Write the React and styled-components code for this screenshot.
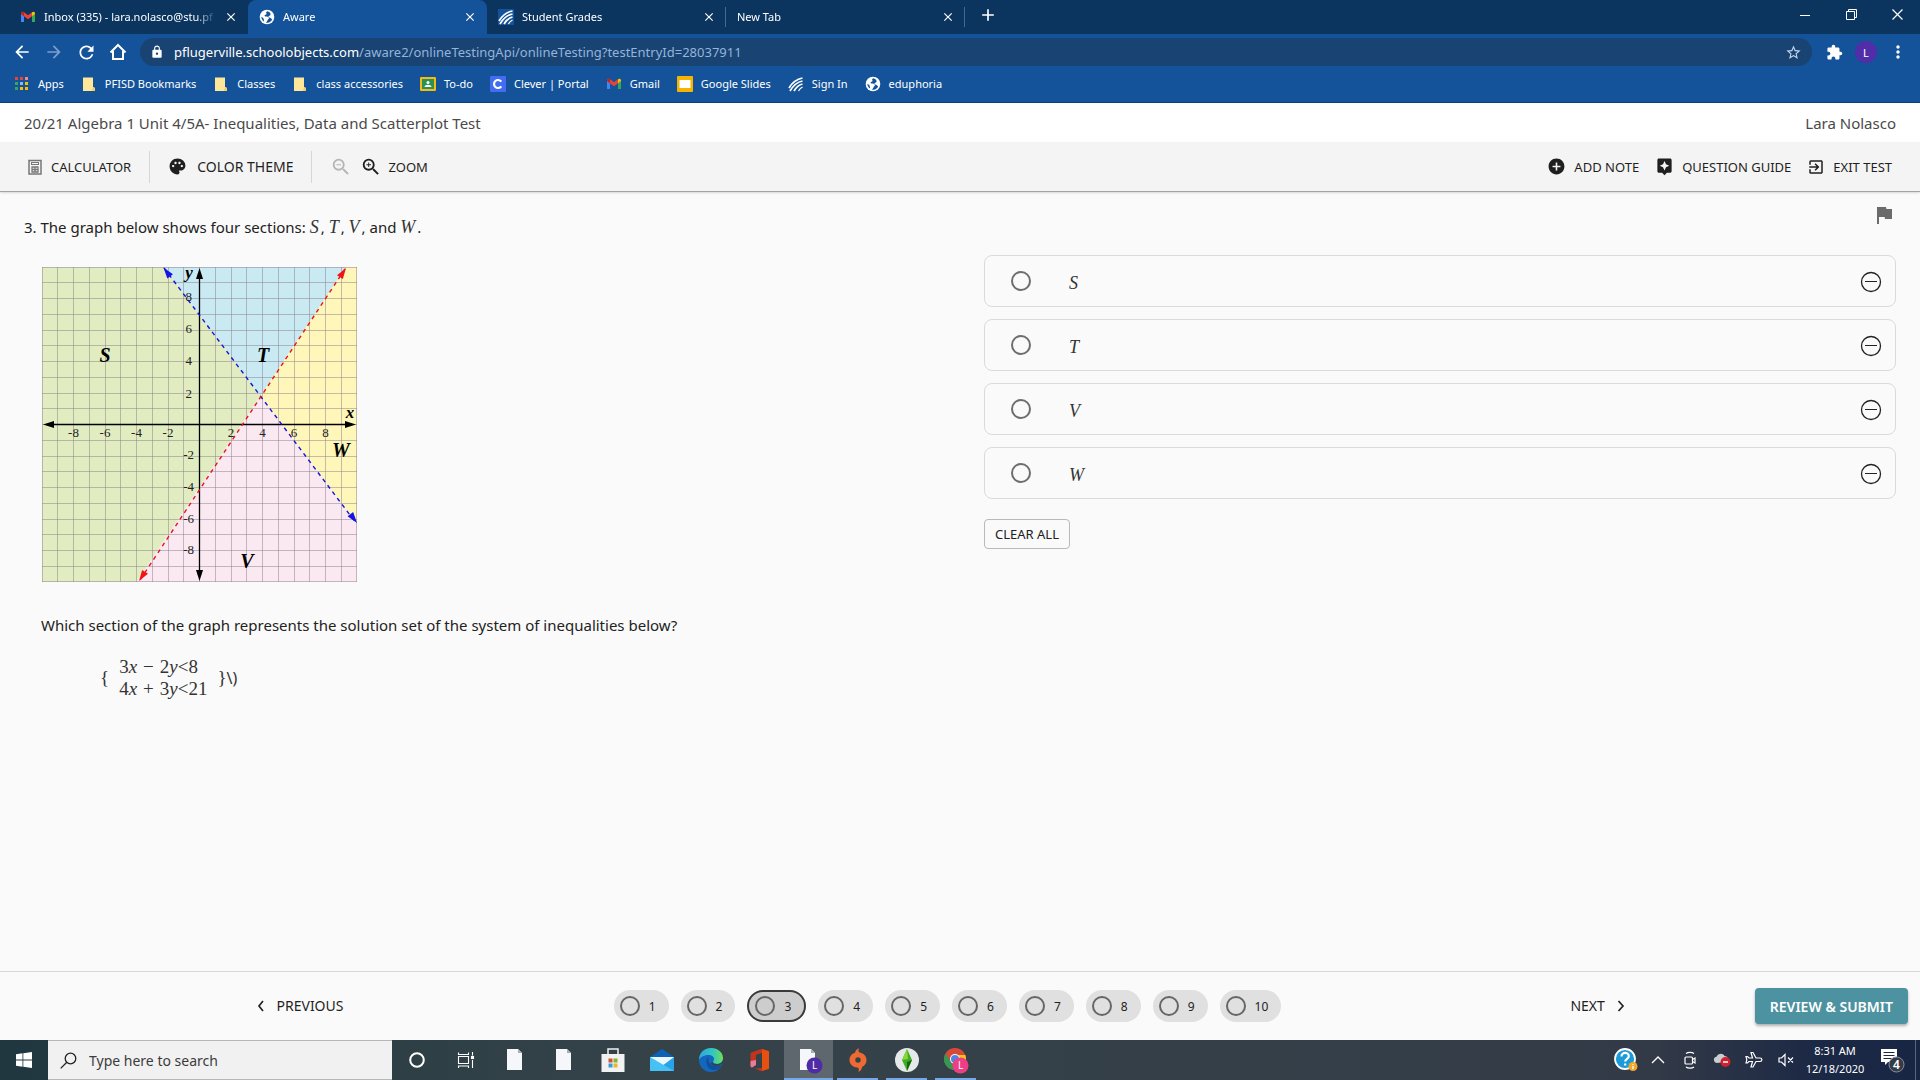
import React, { useState } from "react";
import styled, { createGlobalStyle, css } from "styled-components";
import {
  MdArrowBack,
  MdArrowForward,
  MdRefresh,
  MdLock,
  MdStarBorder,
  MdExtension,
  MdMoreVert,
  MdPalette,
  MdZoomIn,
  MdZoomOut,
  MdAddCircle,
  MdAssistant,
  MdExitToApp,
  MdFlag,
  MdClose,
  MdAdd,
} from "react-icons/md";

const sans = `"Noto Sans", "Open Sans", sans-serif`;
const serif = `"Liberation Serif", serif`;

const GlobalStyle = createGlobalStyle`
  *, *::before, *::after { box-sizing: border-box; }
  body { margin: 0; background: #fafafa; color: #222; font-family: ${sans}; }
  button, input { font: inherit; color: inherit; margin: 0; }
  button { padding: 0; border: 0; background: none; cursor: pointer; }
  a { color: inherit; text-decoration: none; }
  svg { display: block; flex: none; }
`;

const Page = styled.div`
  display: flex;
  flex-direction: column;
  min-height: 100vh;
`;

/* ---------- browser window ---------- */

const Browser = styled.header`
  background: #14539a;
  color: #fff;
  border-bottom: 1px solid #123f73;
  font-size: 12px;
`;

const TabStrip = styled.div`
  display: flex;
  height: 34px;
  padding-left: 9px;
  background: #0b355f;
`;

const Tab = styled.div`
  display: flex;
  align-items: center;
  flex: 0 1 239px;
  min-width: 0;
  gap: 8px;
  padding: 0 10px 0 11px;
  border-radius: 8px 8px 0 0;
  background: ${(p) => (p.$active ? "#14539a" : "transparent")};
`;

const TabRule = styled.div`
  width: 1px;
  height: 20px;
  margin: 7px 0 0 -1px;
  background: #3f6a98;
`;

const TabTitle = styled.button`
  flex: 1;
  min-width: 0;
  overflow: hidden;
  text-align: left;
  font-size: 11px;
  line-height: 20px;
  white-space: nowrap;
  mask-image: linear-gradient(90deg, #000 88%, transparent);
`;

const IconButton = styled.button`
  display: grid;
  place-items: center;
  flex: none;
  width: ${(p) => p.$size || 32}px;
  height: ${(p) => p.$size || 32}px;
  color: ${(p) => p.$color || "inherit"};
`;

const WindowControls = styled.div`
  display: flex;
  margin-left: auto;
`;

const WindowButton = styled.button`
  display: grid;
  place-items: center;
  width: 46px;
  height: 29px;
`;

const AddressRow = styled.div`
  display: flex;
  align-items: center;
  height: 36px;
  padding: 0 6px;
`;

const AddressBar = styled.div`
  display: flex;
  align-items: center;
  flex: 1;
  min-width: 0;
  height: 28px;
  margin: 0 6px;
  padding: 0 10px;
  border-radius: 14px;
  background: #194372;
`;

const Url = styled.div`
  flex: 1;
  min-width: 0;
  margin-left: 10px;
  overflow: hidden;
  white-space: nowrap;
  font-size: 13px;
  line-height: 20px;
  color: #93b4dc;

  b {
    font-weight: 400;
    color: #fff;
  }
`;

const Avatar = styled.span`
  display: grid;
  place-items: center;
  width: 22px;
  height: 22px;
  border-radius: 50%;
  background: #512da8;
  font-size: 11px;
`;

const Bookmarks = styled.nav`
  display: flex;
  align-items: center;
  gap: 17px;
  height: 32px;
  padding: 0 14px 4px;
`;

const Bookmark = styled.a`
  display: flex;
  align-items: center;
  gap: 8px;
  font-size: 11px;
  line-height: 16px;
  white-space: nowrap;
`;

/* ---------- test header ---------- */

const TitleBar = styled.div`
  display: flex;
  align-items: center;
  justify-content: space-between;
  height: 39px;
  padding: 0 24px;
  background: #fff;
  color: #4a4a4a;
  font-size: 15px;
`;

const TestTitle = styled.h1`
  margin: 0;
  font-size: inherit;
  font-weight: 400;
`;

const ToolBar = styled.div`
  display: flex;
  align-items: center;
  justify-content: space-between;
  height: 50px;
  padding: 0 28px 0 27px;
  background: #f4f4f4;
  border-bottom: 1px solid #a3a3a3;
  box-shadow: 0 1px 2px rgba(0, 0, 0, 0.14);
`;

const ToolGroup = styled.div`
  display: flex;
  align-items: center;
  gap: ${(p) => p.$gap || 16}px;
`;

const Tool = styled.button`
  display: flex;
  align-items: center;
  gap: ${(p) => p.$gap || 8}px;
  font-size: ${(p) => (p.$large ? 14 : 13)}px;
  line-height: 20px;
  color: #1f1f1f;
`;

const ToolRule = styled.div`
  width: 1px;
  height: 32px;
  background: #d6d6d6;
`;

/* ---------- question ---------- */

const Main = styled.main`
  display: grid;
  grid-template-columns: minmax(0, 1fr) minmax(0, 1fr);
  gap: 48px;
  flex: 1;
  padding: 11px 24px 24px;
`;

const Question = styled.section`
  padding-top: 12px;
  font-size: 15px;
  line-height: 24px;
`;

const Prompt = styled.p`
  margin: 0;
  padding-left: ${(p) => (p.$indent ? 17 : 0)}px;
`;

const Var = styled.i`
  margin-right: 2px;
  font: italic 18px/20px ${serif};
  color: #333;
`;

const Graph = styled.svg`
  margin: 28px 0 31px 18px;
  width: 315px;
  height: 315px;
  overflow: visible;
  font-family: ${serif};
`;

const Equations = styled.div`
  display: flex;
  align-items: center;
  gap: 10px;
  margin: 19px 0 0 76px;
  font: 19px/22px ${serif};
  color: #333;
`;

const Operator = styled.span`
  padding: 0 6px;
`;

const Trail = styled.span`
  font-family: ${sans};
  font-size: 16px;
`;

const Answers = styled.form`
  display: flex;
  flex-direction: column;
  align-items: stretch;
`;

const FlagButton = styled(IconButton)`
  align-self: flex-end;
  color: #6b6b6b;
`;

const AnswerList = styled.div`
  display: grid;
  gap: 12px;
  margin: 28px 0 20px;
`;

const Answer = styled.div`
  display: flex;
  align-items: center;
  height: 52px;
  padding: 0 15px 0 26px;
  border: 1px solid #d9dadb;
  border-radius: 8px;

  label {
    flex: 1;
    padding: 4px 0 0 38px;
  }
`;

const Radio = styled.input`
  appearance: none;
  flex: none;
  width: 20px;
  height: 20px;
  border: 2px solid #6e6e6e;
  border-radius: 50%;

  &:checked {
    background: radial-gradient(#6e6e6e 45%, transparent 50%);
  }
`;

const ClearButton = styled.button`
  align-self: flex-start;
  height: 30px;
  padding: 0 10px;
  border: 1px solid #b9b9b9;
  border-radius: 4px;
  font-size: 13px;
`;

/* ---------- question navigation ---------- */

const Footer = styled.footer`
  display: grid;
  grid-template-columns: 600fr 695fr 625fr;
  align-items: center;
  height: 69px;
  border-top: 1px solid #d5d9d9;
`;

const FooterCell = styled.div`
  display: flex;
  align-items: center;
  justify-content: ${(p) => (p.$end ? "flex-end" : "center")};
  gap: ${(p) => p.$gap || 0}px;
  padding-right: ${(p) => (p.$end ? 12 : 0)}px;
`;

const Pill = styled.button`
  display: flex;
  align-items: center;
  gap: 9px;
  height: 32px;
  padding: 0 13px 0 6px;
  border-radius: 16px;
  background: #e0e0e0;
  font-size: 12px;

  &::before {
    content: "";
    width: 20px;
    height: 20px;
    border: 2px solid #666;
    border-radius: 50%;
  }

  ${(p) =>
    p.$current &&
    css`
      border: 2px solid #3a3a3a;
      background: #cdcdcd;
    `}
`;

const Submit = styled.button`
  height: 36px;
  padding: 0 15px;
  border-radius: 4px;
  background: #4d92a1;
  box-shadow: 0 2px 3px rgba(0, 0, 0, 0.3);
  color: #fff;
  font-size: 14px;
  font-weight: 600;
`;

/* ---------- taskbar ---------- */

const Taskbar = styled.div`
  display: flex;
  align-items: stretch;
  height: 40px;
  background: linear-gradient(90deg, #20373f, #354349 33%, #343e48 72%, #333a47 86%, #1b2845 95%, #182644);
  color: #fff;
`;

const StartButton = styled(IconButton)`
  width: 48px;
  height: 40px;
`;

const SearchBox = styled.label`
  display: flex;
  align-items: center;
  gap: 12px;
  flex: 0 1 344px;
  padding: 0 12px;
  border: 1px solid #b5b8ba;
  border-width: 1px 0;
  background: #f1f1f1;
  color: #222;

  input {
    flex: 1;
    min-width: 0;
    padding: 0;
    border: 0;
    outline: 0;
    background: none;
    font-size: 14px;
  }

  input::placeholder {
    color: #3c3c3c;
    opacity: 1;
  }
`;

const TaskButton = styled.button`
  display: grid;
  place-items: center;
  width: 49px;
  padding: 0 ${(p) => (p.$active ? 0 : 4)}px;
  background: ${(p) => (p.$active ? "#5d676d" : "none")};

  &::after {
    content: "";
    grid-area: 1 / 1;
    align-self: end;
    justify-self: stretch;
    height: 2px;
    background: ${(p) => (p.$open ? "#76a9e8" : "transparent")};
  }

  svg {
    grid-area: 1 / 1;
  }
`;

const Tray = styled.div`
  display: flex;
  align-items: center;
  margin-left: auto;
`;

const Clock = styled.time`
  display: block;
  width: 66px;
  text-align: center;
  font-size: 11px;
  line-height: 18px;
`;

const NoticeButton = styled(IconButton)`
  width: 48px;
  height: 40px;
  margin-right: 4px;
  border-right: 1px solid #5b6580;
`;

/* ---------- drawings ---------- */

const GmailIcon = () => (
  <svg width="16" height="16" viewBox="0 0 16 16">
    <path d="M1 4v9h3V7z" fill="#4285f4" />
    <path d="M15 4v9h-3V7z" fill="#34a853" />
    <path d="M1 4.5C1 2.700 2.700 2.200 4 3.200L8 6.200l4-3v4L8 10.200 4 7.200 1 5z" fill="#ea4335" />
    <path d="M12 3.200c1.300-1 3-.5 3 1.300V5l-3 2.200z" fill="#fbbc04" />
    <path d="M1 4.500C1 3 2.500 2.200 4 3.200v4L1 5z" fill="#c5221f" />
  </svg>
);

const GlobeIcon = () => (
  <svg width="16" height="16" viewBox="0 0 16 16">
    <circle cx="8" cy="8" r="7.300" fill="#fff" />
    <path
      d="M8.500 2.200c-1.500.5-1.700 1.600-1 2.300.4.600-.4 1.200-1.200 1.300-1 .3-.8 1.500.2 1.700 1.600 0 3 .2 3.400 1.300.4 1-.9 1.400-1.300 2.300-.3.900-.9 2-1.700 2.300 2.800 1 5.800-.9 6.300-3.400-1 .2-1.300-1-2.200-1.200-.8-.4-1.700-.4-1.500-1.300.2-.8 1.300-.6 1.900-1.200.4-.7-.3-1.200 0-2.200-.8-.9-1.800-1.600-2.900-1.900zM2.400 7.700c.9.700 2.400 1.400 2.300 2.400 0 .9.500 1.600.4 2.400-1.700-.9-2.800-2.700-2.700-4.800z"
      fill="#14539a"
    />
  </svg>
);

const GradesIcon = ({ boxed }) => (
  <svg width="16" height="16" viewBox="0 0 16 16">
    {boxed && <rect width="16" height="16" fill="#14539a" />}
    <g fill="none" stroke="#fff" strokeWidth="1.700">
      <path d="M1 12C4 7 9 3 14.500 2" />
      <path d="M2 15C5 10 9 6 14.500 5" />
      <path d="M6 15C8 11.500 10.500 9 14.500 8" />
      <path d="M10.500 15c1-1.800 2.200-3 4-4" strokeWidth="1.200" />
    </g>
  </svg>
);

const AppsIcon = () => (
  <svg width="16" height="16" viewBox="0 0 16 16">
    {["#ea4335", "#ea4335", "#f28b82", "#34a853", "#8ab4f8", "#fbbc04", "#34a853", "#fbbc04", "#fbbc04"].map((c, i) => (
      <rect key={i} x={1 + (i % 3) * 5} y={1 + Math.floor(i / 3) * 5} width="3" height="3" fill={c} />
    ))}
  </svg>
);

const FolderIcon = () => (
  <svg width="16" height="16" viewBox="0 0 16 16">
    <path d="M2 1.500h10v9.500l2 1v3H2z" fill="#ffe79a" />
    <path d="M12 11l2 1v3h-3z" fill="#f3cd62" />
  </svg>
);

const ClassroomIcon = () => (
  <svg width="16" height="16" viewBox="0 0 16 16">
    <rect y="1" width="16" height="14" rx="1" fill="#f5ba15" />
    <rect x="2" y="3" width="12" height="10" fill="#2b9252" />
    <circle cx="8" cy="6.500" r="1.500" fill="#fff" />
    <path d="M4.500 11c0-3 7-3 7 0z" fill="#fff" />
  </svg>
);

const CleverIcon = () => (
  <svg width="16" height="16" viewBox="0 0 16 16">
    <rect width="16" height="16" rx="1" fill="#436cf2" />
    <path d="M11.300 5.700A4 4 0 1 0 11.300 10.300" fill="none" stroke="#fff" strokeWidth="2.200" />
  </svg>
);

const SlidesIcon = () => (
  <svg width="16" height="16" viewBox="0 0 16 16">
    <rect width="16" height="16" rx="1" fill="#f4b400" />
    <rect x="2.500" y="4" width="11" height="8" fill="#fff" />
  </svg>
);

const HomeIcon = () => (
  <svg width="18" height="18" viewBox="0 0 18 18" fill="none" stroke="#fff" strokeWidth="2">
    <path d="M1.500 9.500L9 2l7.500 7.500M4 8v8h10V8" />
  </svg>
);

const CalculatorIcon = () => (
  <svg width="16" height="16" viewBox="0 0 16 16" fill="none" stroke="#777">
    <rect x="2" y="1.500" width="12" height="13.500" strokeWidth="1.500" />
    <rect x="4.500" y="3.500" width="7" height="2" />
    <path d="M4.500 8h7M4.500 10.500h7M4.500 13h7M5 7.500v6M8 7.500v6M11 7.500v6" strokeWidth="1.300" />
  </svg>
);

const MinusCircle = () => (
  <svg width="22" height="22" viewBox="0 0 22 22" fill="none" stroke="#222" strokeWidth="1.300">
    <circle cx="11" cy="11" r="9.500" />
    <path d="M5 10.500h12" strokeWidth="1" />
  </svg>
);

const Chevron = ({ right }) => (
  <svg width="8" height="12" viewBox="0 0 8 12" fill="none" stroke="#222" strokeWidth="1.700">
    <path d={right ? "M1.500 1l4.500 5-4.500 5" : "M6 1L2 6l4 5"} />
  </svg>
);

const MinimizeIcon = () => (
  <svg width="10" height="10" viewBox="0 0 10 10" stroke="#fff">
    <path d="M0 5.500h10" />
  </svg>
);
const RestoreIcon = () => (
  <svg width="11" height="11" viewBox="0 0 11 11" fill="none" stroke="#fff">
    <path d="M.5 2.500h8v8h-8zM2.500 2.500v-2h8v8h-2" />
  </svg>
);
const CloseWindowIcon = () => (
  <svg width="11" height="11" viewBox="0 0 11 11" stroke="#fff" strokeWidth="1.200">
    <path d="M.5.500l10 10M10.500.5l-10 10" />
  </svg>
);

const WindowsIcon = () => (
  <svg width="16" height="16" viewBox="0 0 16 16" fill="#fff">
    <path d="M0 2.200L6.500 1.300v6.300H0zM7.300 1.200L16 0v7.600H7.300zM0 8.400h6.500v6.300L0 13.800zM7.300 8.400H16V16l-8.700-1.200z" />
  </svg>
);

const SearchIcon = () => (
  <svg width="17" height="17" viewBox="0 0 17 17" fill="none" stroke="#222" strokeWidth="1.300">
    <circle cx="10.500" cy="6.500" r="5.300" />
    <path d="M6.800 10.300L.7 16.400" />
  </svg>
);

const CortanaIcon = () => (
  <svg width="20" height="20" viewBox="0 0 20 20" fill="none" stroke="#fff" strokeWidth="2">
    <circle cx="10" cy="10" r="6.800" />
  </svg>
);

const TaskViewIcon = () => (
  <svg width="18" height="18" viewBox="0 0 18 18" fill="none" stroke="#fff" strokeWidth="1.100">
    <path d="M1.500 5.500h10v7h-10zM1.500 1.500v2h10v-2M1.500 17v-2h10v2M15.500 1v3.500M15.500 9v8" />
    <rect x="14.500" y="5.500" width="2" height="2" fill="#fff" />
  </svg>
);

const sheet = (
  <>
    <path d="M4 1h11l4 4v17H4z" fill="#f6f7fb" />
    <path d="M15 1v4h4z" fill="#a9adb2" />
  </>
);

const SheetIcon = () => <svg width="24" height="24" viewBox="0 0 24 24">{sheet}</svg>;

const SheetUserIcon = () => (
  <svg width="28" height="28" viewBox="0 0 28 28">
    <g transform="translate(1 2)">{sheet}</g>
    <circle cx="19.500" cy="19.500" r="8" fill="#4f2ca5" />
    <text x="19.500" y="23" fontSize="10" fill="#fff" textAnchor="middle">L</text>
  </svg>
);

const StoreIcon = () => (
  <svg width="24" height="24" viewBox="0 0 24 24">
    <path d="M7 7V1h10v6" fill="none" stroke="#f2f2f2" strokeWidth="1.500" />
    <rect x=".5" y="6" width="23" height="18" fill="#f2f2f2" />
    <path d="M7.500 10.500h4v4h-4z" fill="#d8512f" />
    <path d="M12.500 10.500h4v4h-4z" fill="#7fb535" />
    <path d="M7.500 15.500h4v4h-4z" fill="#2c9fe0" />
    <path d="M12.500 15.500h4v4h-4z" fill="#f0b52b" />
  </svg>
);

const MailIcon = () => (
  <svg width="24" height="24" viewBox="0 0 24 24">
    <path d="M0 9l12-8 12 8v3H0z" fill="#0d62b4" />
    <path d="M0 9h24v14H0z" fill="#29a3e8" />
    <path d="M0 9h24L12 18z" fill="#eef6fd" />
    <path d="M0 9l24 14H0z" fill="#46c1f5" />
  </svg>
);

const EdgeIcon = () => (
  <svg width="24" height="24" viewBox="0 0 24 24">
    <defs>
      <linearGradient id="edgeTop">
        <stop offset="0" stopColor="#2ba6e0" />
        <stop offset=".6" stopColor="#35c8bd" />
        <stop offset="1" stopColor="#6fe052" />
      </linearGradient>
    </defs>
    <circle cx="12" cy="12" r="12" fill="#1567bd" />
    <path d="M0 12C0 4 6 0 12 0c7 0 12 4.500 12 10 0 4-3 6-6 6-3 0-4-1-4-2s1-1.500 1-3c0-2-2-4-5.500-4C4.500 7 1 9.500 0 12z" fill="url(#edgeTop)" />
    <path d="M9.500 9C6 11 6 20 14 22c4 0 7-2 9-5-2 1-5 2-8 1-4-1-6-4-5.500-9z" fill="#0f4f9c" />
    <path d="M24 15c-2 2.300-5.500 3.500-9 2.700-2-.8-3-1.700-3.500-2.700l2.500-1c0 1 1 2 4 2 2.500 0 5-1.500 6-4z" fill="#35444a" />
  </svg>
);

const OfficeIcon = () => (
  <svg width="20" height="24" viewBox="0 0 20 24">
    <path d="M11 1l8 2.200v17.600L11 23l-6-2.500 7-.5V5L6 6.800V17l-4 2.500c-1-.4-1.500-1-1.500-2V6.500C.5 5.500 1 4.700 2 4.300z" fill="#c2341c" />
    <path d="M12 1l7 2.200v17.600L12 23z" fill="#e8500f" />
    <path d="M.5 13L6 12v5l-4 2.500c-1-.4-1.500-1-1.500-2z" fill="#e87a9b" />
  </svg>
);

const OriginIcon = () => (
  <svg width="20" height="24" viewBox="0 0 20 24">
    <path d="M11 0C9 1 7 3 7 4.800 3 6 1.500 9 1.500 12c0 4 3 7 7.500 7.500 1 0 2.500.5 1.500 4.500 2-1 3.500-3 3.500-5 3-1.500 4.500-4 4.500-7 0-4-3-7-7-7.600C10.500 4 10 2.500 11 0zM10 9.300a2.700 2.700 0 1 1 0 5.400 2.700 2.700 0 0 1 0-5.400z" fill="#ed6a33" fillRule="evenodd" />
  </svg>
);

const SimsIcon = () => (
  <svg width="24" height="24" viewBox="0 0 24 24">
    <circle cx="12" cy="12" r="12" fill="#e6e9ea" />
    <path d="M12 1l5 11-5 11-5-11z" fill="#3faf22" />
    <path d="M12 1l1 10-6 1z" fill="#8ad43c" />
    <path d="M17 12l-5 11V14z" fill="#17650f" />
  </svg>
);

const ChromeIcon = () => (
  <svg width="26" height="28" viewBox="0 0 26 28">
    <circle cx="12" cy="13" r="11" fill="#d9493a" />
    <path d="M2.500 7.500L9 18l3 6A11 11 0 0 1 2.500 7.500z" fill="#2f9a52" />
    <path d="M12 9h10.300A11 11 0 0 1 12 24z" fill="#fbc116" />
    <circle cx="12" cy="13" r="5" fill="#fff" />
    <circle cx="12" cy="13" r="4" fill="#4a86e8" />
    <circle cx="17.500" cy="19.500" r="8" fill="#ec3f86" />
    <text x="17.500" y="23" fontSize="10" fill="#fff" textAnchor="middle">L</text>
  </svg>
);

const HelpIcon = () => (
  <svg width="24" height="24" viewBox="0 0 24 24">
    <circle cx="11" cy="11" r="10" fill="#1d9bd7" stroke="#fff" strokeWidth="1.800" />
    <path d="M7.500 8.500c0-5 7.500-4.500 7.300-.3 0 2.600-3.600 2.800-3.600 5.300M11.200 15.500v2" fill="none" stroke="#fff" strokeWidth="2.200" />
    <circle cx="19" cy="18.500" r="4.500" fill="#f3a92b" />
    <path d="M19 16v1M19 18v3" stroke="#fff" strokeWidth="1.300" />
  </svg>
);

const UpIcon = () => (
  <svg width="14" height="8" viewBox="0 0 14 8" fill="none" stroke="#fff" strokeWidth="1.400">
    <path d="M1 7l6-6 6 6" />
  </svg>
);

const MeetIcon = () => (
  <svg width="16" height="18" viewBox="0 0 16 18" fill="none" stroke="#fff" strokeWidth="1.200">
    <rect x="3" y="6" width="7.500" height="7" rx="1" />
    <path d="M10.500 8.500l2.500-1.500v5l-2.500-1.500M4 2.500c2-1.500 6-1.500 8 0M4 16c2 1.500 6 1.500 8 0" />
  </svg>
);

const CloudIcon = () => (
  <svg width="18" height="16" viewBox="0 0 18 16">
    <path d="M3.500 11a3.200 3.200 0 0 1 0-6.300C5 1 10 .5 11.500 4c3 0 4.500 3 3 6z" fill="#c9cdd1" />
    <circle cx="12.500" cy="10" r="5" fill="#d1202f" />
    <path d="M10 10h5" stroke="#fff" strokeWidth="1.500" />
  </svg>
);

const PlaneIcon = () => (
  <svg width="18" height="18" viewBox="0 0 18 18" fill="none" stroke="#fff" strokeWidth="1.200">
    <path d="M11 7h4c2.500 0 2.500 3.500 0 3.500h-4L8 16H6l1.500-5.500H4L2.500 12H1l.8-3.200L1 5.500h1.500L4 7h3.500L6 1.500h2z" />
  </svg>
);

const MuteIcon = () => (
  <svg width="16" height="14" viewBox="0 0 16 14" fill="none" stroke="#fff" strokeWidth="1.200">
    <path d="M1 5h2.500L7 1.500v11L3.500 9H1zM10 4.500l5 5M15 4.500l-5 5" />
  </svg>
);

const NoticeIcon = () => (
  <svg width="26" height="26" viewBox="0 0 26 26">
    <path d="M2 2h16v13H9l-3 3v-3H2z" fill="#fff" />
    <path d="M4.500 5.500h11M4.500 8.500h11M4.500 11.500h8" stroke="#1b2845" />
    <circle cx="17.500" cy="17.500" r="7.500" fill="#333a48" stroke="#8a909c" />
    <text x="17.500" y="22" fontSize="12" fontWeight="600" fill="#fff" textAnchor="middle">4</text>
  </svg>
);

/* ---------- coordinate plane ---------- */

const UNIT = 15.75;
const px = (x) => (x + 10) * UNIT;
const py = (y) => (10 - y) * UNIT;
const points = (list) => list.map(([x, y]) => `${px(x)},${py(y)}`).join(" ");
const CROSS = [3.88, 1.82];
const regions = [
  { fill: "#e1ecc1", at: [[-10, 10], [-2.250, 10], CROSS, [-4, -10], [-10, -10]] },
  { fill: "#c9e9f3", at: [[-2.250, 10], [9.300, 10], CROSS] },
  { fill: "#fff6b9", at: [[9.300, 10], [10, 10], [10, -6.300], CROSS] },
  { fill: "#fbe9f2", at: [CROSS, [10, -6.300], [10, -10], [-4, -10]] },
];
const xLabels = [-8, -6, -4, -2, 2, 4, 6, 8];
const yLabels = [[8, 34], [6, 66], [4, 98], [2, 131], [-2, 192], [-4, 224], [-6, 256], [-8, 287]];
const regionNames = [["S", 63, 95], ["T", 221, 95], ["V", 205, 301], ["W", 299, 190]];

function Arrow({ x, y, angle, color }) {
  return <path d="M0 0L-11 3.500V-3.500z" fill={color} transform={`translate(${x} ${y}) rotate(${angle})`} />;
}

function CoordinatePlane() {
  return (
    <Graph viewBox="0 0 315 315" role="img" aria-label="Two dashed lines dividing a coordinate plane">
      {regions.map((r) => (
        <polygon key={r.fill} points={points(r.at)} fill={r.fill} />
      ))}
      <g stroke="#8c7f8c" strokeOpacity=".5">
        {Array.from({ length: 21 }, (_, i) => {
          const p = Math.min(314.5, Math.floor(i * UNIT) + 0.5);
          return <path key={i} d={`M${p} 0V315M0 ${p}H315`} />;
        })}
      </g>
      <path d="M157.500 6V309M6 157.500H309" stroke="#000" strokeWidth="1.300" />
      <Arrow x={157.5} y={1} angle={-90} color="#000" />
      <Arrow x={157.5} y={314} angle={90} color="#000" />
      <Arrow x={1} y={157.5} angle={180} color="#000" />
      <Arrow x={314} y={157.5} angle={0} color="#000" />
      <path d="M122 1L314 256" stroke="#1414d8" strokeWidth="1.400" strokeDasharray="4 4" />
      <path d="M303 2L98 313" stroke="#e81414" strokeWidth="1.400" strokeDasharray="4 4" />
      <Arrow x={121.5} y={0.5} angle={233} color="#1414e8" />
      <Arrow x={315} y={256} angle={53} color="#1414e8" />
      <Arrow x={304} y={1} angle={-56.5} color="#f01414" />
      <Arrow x={97} y={314} angle={123.5} color="#f01414" />
      <g fontSize="13" fill="#222">
        {xLabels.map((n) => (
          <text key={n} x={px(n)} y="170" textAnchor="middle">{n}</text>
        ))}
        {yLabels.map(([n, y]) => (
          <text key={n} x={n > 0 ? 150 : 152} y={y} textAnchor="end">{n}</text>
        ))}
      </g>
      <g fontWeight="700" fontStyle="italic" textAnchor="middle">
        {regionNames.map(([name, x, y]) => (
          <text key={name} x={x} y={y} fontSize="20">{name}</text>
        ))}
        <text x="147" y="11" fontSize="17">y</text>
        <text x="308" y="151" fontSize="17">x</text>
      </g>
    </Graph>
  );
}

/* ---------- data ---------- */

const tabs = [
  { title: "Inbox (335) - lara.nolasco@stu.pf", icon: <GmailIcon /> },
  { title: "Aware", icon: <GlobeIcon />, active: true },
  { title: "Student Grades", icon: <GradesIcon boxed />, rule: true },
  { title: "New Tab", rule: true },
];

const bookmarks = [
  ["Apps", <AppsIcon />],
  ["PFISD Bookmarks", <FolderIcon />],
  ["Classes", <FolderIcon />],
  ["class accessories", <FolderIcon />],
  ["To-do", <ClassroomIcon />],
  ["Clever | Portal", <CleverIcon />],
  ["Gmail", <GmailIcon />],
  ["Google Slides", <SlidesIcon />],
  ["Sign In", <GradesIcon />],
  ["eduphoria", <GlobeIcon />],
];

const apps = [
  { name: "Cortana", icon: <CortanaIcon /> },
  { name: "Task view", icon: <TaskViewIcon /> },
  { name: "Document", icon: <SheetIcon /> },
  { name: "Second document", icon: <SheetIcon /> },
  { name: "Store", icon: <StoreIcon /> },
  { name: "Mail", icon: <MailIcon /> },
  { name: "Edge", icon: <EdgeIcon /> },
  { name: "Office", icon: <OfficeIcon /> },
  { name: "Test window", icon: <SheetUserIcon />, open: true, active: true },
  { name: "Origin", icon: <OriginIcon />, open: true },
  { name: "The Sims", icon: <SimsIcon />, open: true },
  { name: "Chrome", icon: <ChromeIcon />, open: true },
];

const tray = [
  ["Help", <HelpIcon />],
  ["Hidden icons", <UpIcon />],
  ["Meet now", <MeetIcon />],
  ["OneDrive", <CloudIcon />],
  ["Airplane mode", <PlaneIcon />],
  ["Volume", <MuteIcon />],
];

const choices = ["S", "T", "V", "W"];

export default function App() {
  const [answer, setAnswer] = useState(null);

  return (
    <Page>
      <GlobalStyle />
      <Browser>
        <TabStrip>
          {tabs.map((t) => (
            <React.Fragment key={t.title}>
              <Tab $active={t.active}>
                {t.icon}
                <TabTitle>{t.title}</TabTitle>
                <IconButton $size={14} aria-label={`Close ${t.title}`}><MdClose size={14} /></IconButton>
              </Tab>
              {t.rule && <TabRule />}
            </React.Fragment>
          ))}
          <WindowButton aria-label="New tab"><MdAdd size={20} /></WindowButton>
          <WindowControls>
            <WindowButton aria-label="Minimize"><MinimizeIcon /></WindowButton>
            <WindowButton aria-label="Restore"><RestoreIcon /></WindowButton>
            <WindowButton aria-label="Close window"><CloseWindowIcon /></WindowButton>
          </WindowControls>
        </TabStrip>
        <AddressRow>
          <IconButton aria-label="Back"><MdArrowBack size={20} /></IconButton>
          <IconButton aria-label="Forward" $color="#7d9fcc"><MdArrowForward size={20} /></IconButton>
          <IconButton aria-label="Reload"><MdRefresh size={21} /></IconButton>
          <IconButton aria-label="Home"><HomeIcon /></IconButton>
          <AddressBar>
            <MdLock size={14} />
            <Url role="textbox" aria-label="Address">
              <b>pflugerville.schoolobjects.com</b>/aware2/onlineTestingApi/onlineTesting?testEntryId=28037911
            </Url>
            <IconButton $size={18} $color="#c3d3e8" aria-label="Bookmark this page"><MdStarBorder size={17} /></IconButton>
          </AddressBar>
          <IconButton aria-label="Extensions"><MdExtension size={17} /></IconButton>
          <IconButton aria-label="Profile"><Avatar>L</Avatar></IconButton>
          <IconButton aria-label="Menu"><MdMoreVert size={20} /></IconButton>
        </AddressRow>
        <Bookmarks>
          {bookmarks.map(([name, icon]) => (
            <Bookmark key={name} href="#">{icon}{name}</Bookmark>
          ))}
        </Bookmarks>
      </Browser>

      <TitleBar>
        <TestTitle>20/21 Algebra 1 Unit 4/5A- Inequalities, Data and Scatterplot Test</TestTitle>
        <span>Lara Nolasco</span>
      </TitleBar>
      <ToolBar>
        <ToolGroup $gap={18}>
          <Tool><CalculatorIcon />CALCULATOR</Tool>
          <ToolRule />
          <Tool $large $gap={10}><MdPalette size={19} />COLOR THEME</Tool>
          <ToolRule />
          <ToolGroup $gap={8}>
            <IconButton $size={22} $color="#b5b5b5" aria-label="Zoom out"><MdZoomOut size={22} /></IconButton>
            <Tool $gap={6}><MdZoomIn size={22} />ZOOM</Tool>
          </ToolGroup>
        </ToolGroup>
        <ToolGroup>
          <Tool><MdAddCircle size={19} />ADD NOTE</Tool>
          <Tool><MdAssistant size={19} />QUESTION GUIDE</Tool>
          <Tool><MdExitToApp size={18} />EXIT TEST</Tool>
        </ToolGroup>
      </ToolBar>

      <Main>
        <Question>
          <Prompt>
            3. The graph below shows four sections: <Var>S</Var>, <Var>T</Var>, <Var>V</Var>, and <Var>W</Var>.
          </Prompt>
          <CoordinatePlane />
          <Prompt $indent>Which section of the graph represents the solution set of the system of inequalities below?</Prompt>
          <Equations>
            <span>{"{"}</span>
            <div>
              <div>3<i>x</i><Operator>−</Operator>2<i>y</i>&lt;8</div>
              <div>4<i>x</i><Operator>+</Operator>3<i>y</i>&lt;21</div>
            </div>
            <span>{"}"}<Trail>{"\\)"}</Trail></span>
          </Equations>
        </Question>

        <Answers>
          <FlagButton type="button" $size={24} aria-label="Flag question"><MdFlag size={24} /></FlagButton>
          <AnswerList>
            {choices.map((c) => (
              <Answer key={c}>
                <Radio type="radio" name="answer" id={`answer-${c}`} checked={answer === c} onChange={() => setAnswer(c)} />
                <label htmlFor={`answer-${c}`}><Var>{c}</Var></label>
                <IconButton type="button" $size={20} aria-label={`Eliminate ${c}`}><MinusCircle /></IconButton>
              </Answer>
            ))}
          </AnswerList>
          <ClearButton type="button" onClick={() => setAnswer(null)}>CLEAR ALL</ClearButton>
        </Answers>
      </Main>

      <Footer>
        <FooterCell><Tool $large $gap={12}><Chevron />PREVIOUS</Tool></FooterCell>
        <FooterCell $gap={12}>
          {Array.from({ length: 10 }, (_, i) => (
            <Pill key={i} $current={i === 2}>{i + 1}</Pill>
          ))}
        </FooterCell>
        <FooterCell $end $gap={130}>
          <Tool $large $gap={12}>NEXT<Chevron right /></Tool>
          <Submit>REVIEW &amp; SUBMIT</Submit>
        </FooterCell>
      </Footer>

      <Taskbar>
        <StartButton aria-label="Start"><WindowsIcon /></StartButton>
        <SearchBox>
          <SearchIcon />
          <input type="text" placeholder="Type here to search" aria-label="Search" />
        </SearchBox>
        {apps.map((a) => (
          <TaskButton key={a.name} aria-label={a.name} $open={a.open} $active={a.active}>{a.icon}</TaskButton>
        ))}
        <Tray>
          {tray.map(([name, icon]) => (
            <IconButton key={name} aria-label={name}>{icon}</IconButton>
          ))}
          <Clock>8:31 AM<br />12/18/2020</Clock>
          <NoticeButton aria-label="Notifications"><NoticeIcon /></NoticeButton>
        </Tray>
      </Taskbar>
    </Page>
  );
}
